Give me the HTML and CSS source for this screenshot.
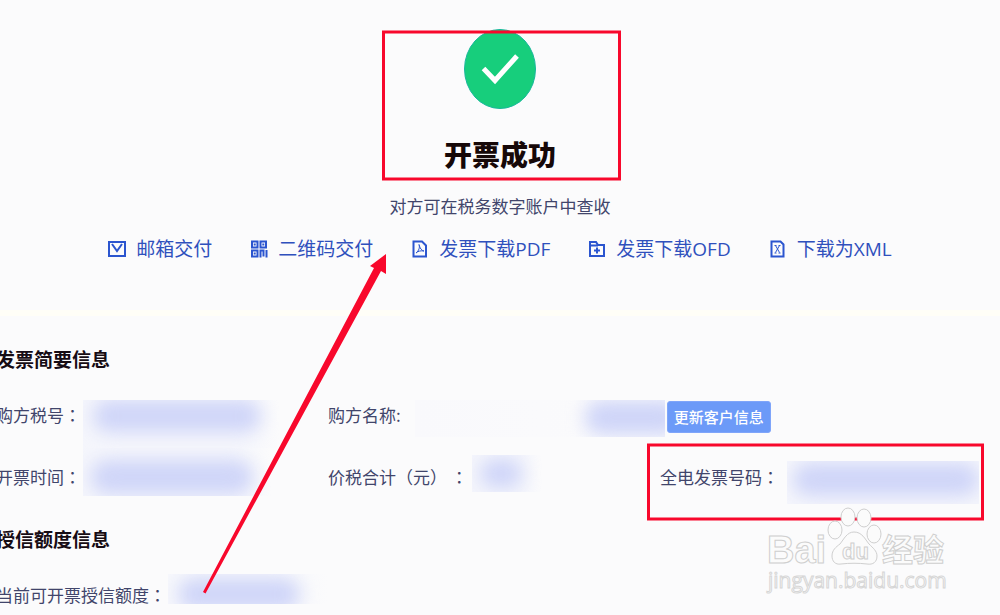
FILE: index.html
```
<!DOCTYPE html>
<html lang="zh-CN">
<head>
  <meta charset="UTF-8" />
  <meta name="viewport" content="width=device-width, initial-scale=1.0" />
  <title>开票成功</title>
  <link rel="stylesheet" href="styles.css">
</head>
<body>
  <section class="hero">
    <svg class="success-icon" viewBox="0 0 72 80" aria-hidden="true">
      <ellipse cx="36" cy="40" rx="35.5" ry="39.5" fill="#17ce7c" stroke="#17b79b" />
      <path d="M19.500 39.500 L31 51.500 L53 27" fill="none" stroke="#fff" stroke-width="5" />
    </svg>
    <h1>开票成功</h1>
    <p class="tip">对方可在税务数字账户中查收</p>
    <nav class="actions">
      <a href="#">
        <svg viewBox="0 0 18 18" aria-hidden="true"><path d="M1 2h16v14H1z M4 4l5 7 5-7" /></svg>
        邮箱交付
      </a>
      <a href="#">
        <svg viewBox="0 0 18 18" aria-hidden="true"><path d="M2 1.500h5.500v6H2z M10.500 1.500H16v6h-5.500z M2 10.500h5.500v6H2z M4.700 3.500v2 M13.300 3.500v2 M4.700 12.500v2 M10.500 17.500v-7h3v6 M16.500 10v7.500" /></svg>
        二维码交付
      </a>
      <a href="#">
        <svg viewBox="0 0 18 18" aria-hidden="true"><path d="M2.500 1.500h8.500l4 4v11H2.500z" /><path class="thin" d="M8 4.500c1 3 0 6-3 8.500 2-2 5-2.500 8-2-2.500-.5-4-2.500-5-6.500" /></svg>
        发票下载PDF
      </a>
      <a href="#">
        <svg viewBox="0 0 18 18" aria-hidden="true"><path d="M2 16V2h6l2 3h6v11z M2 5.500h8 M9 7.500v6 M6 10.500h6" /></svg>
        发票下载OFD
      </a>
      <a href="#">
        <svg viewBox="0 0 18 18" aria-hidden="true"><path d="M2.500 1.500h9l3 3v12h-12z" /><path class="thin" d="M6.500 5.500l4 7 M10.500 5.500l-4 7 M5.500 13h2 M9.500 13h2 M5.500 5.500h2 M9.500 5.500h2" /></svg>
        下载为XML
      </a>
    </nav>
  </section>

  <main class="detail">
    <h2>发票简要信息</h2>
    <div class="fields">
      <div class="field">
        <span class="label">购方税号<i lang="zh-Hant">：</i></span>
        <span class="masked tax-no"></span>
      </div>
      <div class="field wide">
        <span class="label">购方名称:</span>
        <span class="masked buyer"></span>
        <button type="button">更新客户信息</button>
      </div>
      <div class="field second">
        <span class="label">开票时间<i lang="zh-Hant">：</i></span>
        <span class="masked date"></span>
      </div>
      <div class="field second">
        <span class="label">价税合计（元） <i lang="zh-Hant">：</i></span>
        <span class="masked total"></span>
      </div>
      <div class="field second">
        <span class="label">全电发票号码<i lang="zh-Hant">：</i></span>
        <span class="masked invoice-no"></span>
      </div>
    </div>

    <h2 class="credit-title">授信额度信息</h2>
    <div class="field credit">
      <span class="label">当前可开票授信额度<i lang="zh-Hant">：</i></span>
      <span class="masked quota"></span>
    </div>
  </main>

  <!-- marcas rojas -->
  <svg class="marks" width="1000" height="615" viewBox="0 0 1000 615" aria-hidden="true">
    <rect x="383.500" y="32" width="236" height="147" />
    <rect x="648.500" y="445" width="334" height="74" />
    <path d="M386 254 L370 266 L374 268 L203 592 L205.500 593.500 L381 271 L386 274 Z" />
  </svg>

  <svg class="watermark" width="190" height="100" viewBox="0 0 190 100" role="img" aria-label="Baidu 经验">
    <g class="solid">
      <text class="brand" x="7" y="63">Bai</text>
      <ellipse cx="75" cy="30" rx="7" ry="9" />
      <ellipse cx="88" cy="17" rx="7" ry="9" />
      <ellipse cx="104" cy="18" rx="7" ry="9" />
      <ellipse cx="114" cy="34" rx="7" ry="9" />
      <path d="M94 32c8 0 11 7 15 12 4 4 8 7 8 12 0 6-4 9-10 8-8-1-18-1-26 0-6 1-9-3-9-8 0-6 4-9 8-12 4-5 7-12 14-12z" />
      <text class="du" x="82" y="59">du</text>
      <text class="jy" x="122" y="61">经验</text>
      <text class="url" x="8" y="88">jingyan.baidu.com</text>
    </g>
  </svg>
</body>
</html>
```
FILE: styles.css
```
* {
  box-sizing: border-box;
}
body {
  position: relative;
  margin: 0;
  background: #fbfbfc;
  font-family: "Noto Sans CJK SC", sans-serif;
  color: #41456b;
  overflow: hidden;
}
.hero {
  display: flex;
  flex-direction: column;
  align-items: center;
  padding: 29px 0 47px;
  border-bottom: 6px solid #fffef7;
}
.success-icon {
  width: 72px;
  height: 80px;
}
h1 {
  margin: 25px 0 0;
  font-size: 28px;
  font-weight: 900;
  line-height: 40px;
  color: #160808;
}
.tip {
  margin: 20px 0 0;
  font-size: 17px;
  line-height: 24px;
}
.actions {
  display: flex;
  gap: 38px;
  margin-top: 17px;
}
.actions a {
  display: flex;
  align-items: center;
  gap: 10px;
  font-family: "Open Sans", "Noto Sans CJK SC", sans-serif;
  font-size: 19px;
  line-height: 28px;
  color: #2f50bd;
  text-decoration: none;
  white-space: nowrap;
}
.actions svg {
  width: 18px;
  height: 18px;
  fill: none;
  stroke: #2b55cf;
  stroke-width: 2;
}
.actions .thin {
  stroke-width: 1;
}
.detail {
  margin-left: -4px;
  padding: 29px 8px 5px 0;
}
h2 {
  margin: 0;
  font-size: 19px;
  line-height: 28px;
  color: #160c14;
}
.fields {
  display: grid;
  grid-template-columns: repeat(3, 1fr);
  margin-top: 27px;
}
.field {
  display: flex;
  align-items: flex-start;
  font-size: 17px;
  line-height: 30px;
  white-space: nowrap;
}
.wide {
  grid-column: span 2;
}
.label i {
  font-family: "Noto Sans CJK TC", sans-serif;
  font-style: normal;
}
.second .label {
  margin-top: 14px;
}
/* valores ocultos */
.masked {
  position: relative;
  overflow: hidden;
  margin-left: 2px;
  background: #f5f6fc;
}
.masked::before {
  content: "";
  position: absolute;
  border-radius: 16px;
  background: #cfd5f8;
  filter: blur(9px);
}
.tax-no {
  width: 196px;
  height: 48px;
  background: linear-gradient(to right, #f5f6fc 80%, #fbfbfc);
}
.tax-no::before {
  inset: 0 18px 16px 10px;
}
.date {
  width: 188px;
  height: 48px;
  background: linear-gradient(to right, #f5f6fc 80%, #fbfbfc);
}
.date::before {
  inset: 12px 18px 2px 8px;
}
.buyer {
  width: 250px;
  height: 37px;
  margin-left: 14px;
  background: linear-gradient(to right, #f9f9fc, #fbfbfc);
}
.buyer::before {
  inset: 0 -16px 2px 170px;
}
.total {
  width: 70px;
  height: 37px;
  margin: 7px 0 0 4px;
  background: linear-gradient(to right, #f5f6fc 70%, #fbfbfc);
}
.total::before {
  inset: 4px 20px 4px 8px;
}
.invoice-no {
  flex: 1;
  height: 43px;
  margin: 13px 13px 0 8px;
}
.invoice-no::before {
  inset: 2px 0 8px 6px;
}
button {
  height: 32px;
  margin: 1px 0 0 2px;
  padding: 0 6px;
  border: 1px solid #7fa5fa;
  border-radius: 3px;
  background: #6c9af8;
  font: 500 15px/28px "Noto Sans CJK SC", sans-serif;
  color: #fff;
}
.credit-title {
  margin-top: 21px;
}
.credit {
  margin-top: 21px;
}
.credit .label {
  margin-top: 6px;
}
.quota {
  width: 160px;
  height: 30px;
  background: linear-gradient(to right, #f7f8fc 70%, #fbfbfc);
}
.quota::before {
  inset: 4px 28px -6px 10px;
}
.marks {
  position: absolute;
  top: 0;
  left: 0;
  pointer-events: none;
}
.marks rect {
  fill: none;
  stroke: #f8082c;
  stroke-width: 3;
}
.marks path {
  fill: #f8082c;
}
.watermark {
  position: absolute;
  right: 50px;
  bottom: 15px;
  font-family: "Liberation Sans", "Noto Sans CJK SC", sans-serif;
}
.solid {
  fill: #fbfbfb;
  stroke: #cfcfcf;
  stroke-width: 1;
}
.brand {
  font-size: 38px;
  font-weight: bold;
}
.du {
  font-size: 22px;
  font-weight: bold;
}
.jy {
  font-family: "Noto Sans CJK SC", sans-serif;
  font-size: 31px;
  font-weight: bold;
}
.url {
  font-family: "Open Sans", sans-serif;
  font-size: 21px;
  stroke: #d6d6d6;
}
```
